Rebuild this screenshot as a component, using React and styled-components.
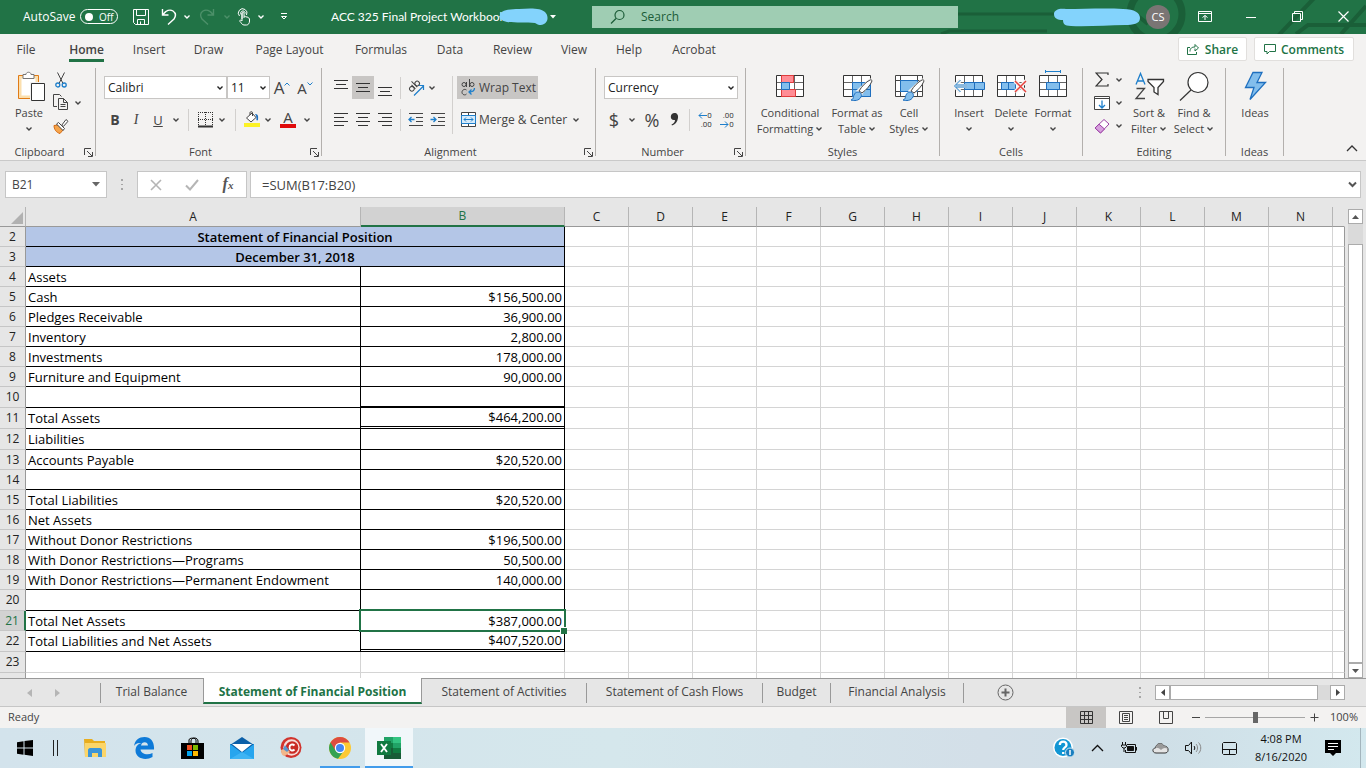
import { useState } from "react";
import styled, { createGlobalStyle } from "styled-components";

const COLUMNS = ["C", "D", "E", "F", "G", "H", "I", "J", "K", "L", "M", "N"];

const ROWS = [
  { n: 2, title: "Statement of Financial Position" },
  { n: 3, title: "December 31, 2018" },
  { n: 4, a: "Assets" },
  { n: 5, a: "Cash", b: "$156,500.00" },
  { n: 6, a: "Pledges Receivable", b: "36,900.00" },
  { n: 7, a: "Inventory", b: "2,800.00" },
  { n: 8, a: "Investments", b: "178,000.00" },
  { n: 9, a: "Furniture and Equipment", b: "90,000.00" },
  { n: 10, tall: true, line: "2px solid #000" },
  { n: 11, tall: true, a: "Total Assets", b: "$464,200.00", line: "3px double #000" },
  { n: 12, tall: true, a: "Liabilities" },
  { n: 13, a: "Accounts Payable", b: "$20,520.00" },
  { n: 14 },
  { n: 15, a: "Total Liabilities", b: "$20,520.00" },
  { n: 16, a: "Net Assets" },
  { n: 17, a: "Without Donor Restrictions", b: "$196,500.00" },
  { n: 18, a: "With Donor Restrictions—Programs", b: "50,500.00" },
  { n: 19, a: "With Donor Restrictions—Permanent Endowment", b: "140,000.00" },
  { n: 20, tall: true },
  { n: 21, a: "Total Net Assets", b: "$387,000.00", selected: true },
  { n: 22, tall: true, a: "Total Liabilities and Net Assets", b: "$407,520.00", line: "3px double #000" },
  { n: 23, tall: true, empty: true },
  { n: "", empty: true },
];

const MENU = ["File", "Home", "Insert", "Draw", "Page Layout", "Formulas", "Data", "Review", "View", "Help", "Acrobat"];
const MENU_WIDTHS = [52, 69, 56, 63, 99, 84, 54, 71, 52, 58, 72];

const SHEETS = [
  { name: "Trial Balance", width: 102 },
  { name: "Statement of Financial Position", width: 219, active: true },
  { name: "Statement of Activities", width: 165 },
  { name: "Statement of Cash Flows", width: 176 },
  { name: "Budget", width: 68 },
  { name: "Financial Analysis", width: 133 },
];

function Chevron({ color = "#444" }) {
  return (
    <svg width="8" height="6" viewBox="0 0 8 6" fill="none" stroke={color} strokeWidth="1.4">
      <path d="M1.5 1.5 4 4l2.5-2.5" />
    </svg>
  );
}

function Launcher({ label }) {
  return (
    <LauncherButton aria-label={label}>
      <svg width="9" height="9" viewBox="0 0 9 9" fill="none" stroke="#444">
        <path d="M.5 7V.5H7M3 3l5 5M8.500 4v4.500H4" />
      </svg>
    </LauncherButton>
  );
}

function Lines({ rows }) {
  return (
    <svg width="14" height="16" viewBox="0 0 14 16" stroke="#333">
      {rows.map(([x1, x2, y]) => <path key={y} d={`M${x1} ${y}.5H${x2}`} />)}
    </svg>
  );
}

function DropDown({ label, value, width }) {
  return (
    <SelectBox $width={width}>
      <select aria-label={label} defaultValue={value}>
        <option>{value}</option>
      </select>
      <Chevron color="#222" />
    </SelectBox>
  );
}

function GridIcon({ children }) {
  return (
    <svg width="32" height="32" viewBox="0 0 32 32" fill="none">
      <path d="M2.500 5.500h27v21h-27z" fill="#fff" />
      <path d="M11.500 5.500v21M20.500 5.500v21M2.500 12.500h27M2.500 19.500h27" stroke="#666" />
      <path d="M2.500 5.500h27v21h-27z" stroke="#333" />
      {children}
    </svg>
  );
}

function Brush() {
  return (
    <>
      <path d="M30 10 20 24l-3-3L29 10z" fill="#fff" stroke="#f3f2f1" strokeWidth="3" />
      <path d="M31 11c-2 5-6 9-10 12l-3-2c3-5 7-9 11-11 1-.5 2 0 2 1z" fill="#fff" stroke="#444" />
      <path d="M17 22c3 0 4 3 3 5-2 4-7 4-10 3 3-1 2-3 3-5 1-2 2-3 4-3z" fill="#83beec" stroke="#1e6fbf" />
    </>
  );
}

function BigTool({ width, lines, arrow, children }) {
  return (
    <BigButton $width={width}>
      {children}
      <span>{lines[0]}</span>
      <span>{lines[1]} {arrow && <Chevron />}</span>
    </BigButton>
  );
}

function TitleBar() {
  return (
    <Title>
      <Circuit viewBox="0 0 500 34" width="500" height="34" fill="none" stroke="#1a5f38" strokeWidth="3">
        <path d="M92 14h100M75 34l8-3h98M200 14h18" />
        <circle cx="197" cy="14" r="4" />
        <circle cx="290" cy="14" r="26" strokeWidth="7" />
        <path d="M475 34 500 6M430 34l12-9h58M410 38l44-46M262 8l20 16" strokeWidth="4" />
      </Circuit>
      <QuickAccess>
        <AutoSave>
          AutoSave
          <Toggle role="switch" aria-checked="false" aria-label="AutoSave"><i />Off</Toggle>
        </AutoSave>
        <TitleButton $width={28} aria-label="Save">
          <svg width="18" height="18" viewBox="0 0 18 18" fill="none" stroke="#fff">
            <path d="M1.500 1.500h15v15h-13l-2-2zM4.500 1.500v6h9v-6M5.500 16.500v-5h7v5M8.500 16.500v-3" />
          </svg>
        </TitleButton>
        <TitleButton $width={28} aria-label="Undo">
          <svg width="16" height="17" viewBox="0 0 16 17" fill="none" stroke="#fff" strokeWidth="1.400">
            <path d="M1.500 1v6h6M2 6.500C5 2.500 9 1 12 3c3 2 3 5 1 8l-6 5.500" />
          </svg>
        </TitleButton>
        <TitleButton $width={8} aria-label="Undo history"><Chevron color="#fff" /></TitleButton>
        <TitleButton $width={32} aria-label="Redo">
          <svg width="16" height="17" viewBox="0 0 16 17" fill="none" stroke="#4c9069" strokeWidth="1.400">
            <path d="M14.500 1v6h-6M14 6.500C11 2.500 7 1 4 3 1 5 1 8 3 11l6 5.500" />
          </svg>
        </TitleButton>
        <TitleButton $width={8} aria-label="Redo history"><Chevron color="#4c9069" /></TitleButton>
        <TitleButton $width={26} aria-label="Touch mode">
          <svg width="14" height="18" viewBox="0 0 14 18" fill="none" stroke="#fff">
            <path d="M5 11V5c0-1.500 2-1.500 2 0v5M7 8.500c1-.8 2 0 2 .8M9 9c1-.5 2 0 2 1M11 10c1-.3 1.500.3 1.500 1v2c0 2-1 4-3 4H7c-2 0-2.500-2-4-3.500-1-1 .5-2 2-.5V5M2.500 8A4.300 4.300 0 1 1 9.500 7M4 6.500A2.300 2.300 0 1 1 8.200 5.500" />
          </svg>
        </TitleButton>
        <TitleButton $width={8} aria-label="Touch mode options"><Chevron color="#fff" /></TitleButton>
        <TitleButton $width={38} aria-label="Customize toolbar">
          <svg width="8" height="8" viewBox="0 0 8 8" fill="none" stroke="#fff"><path d="M1 .5h6M1.500 3.500 4 6l2.500-2.500z" /></svg>
        </TitleButton>
      </QuickAccess>
      <FileName>
        <span>ACC 325 Final Project Workbook</span>
        <svg width="50" height="18" viewBox="0 0 50 18">
          <path d="M1 8C0 3 8 1 20 1c12-1 22-1 26 3 4 4 3 10-1 12-3 2-6 1-9-1-8-1-20 0-28-1-5-1-7-3-8-6z" fill="#83d3fc" />
        </svg>
        <svg width="6" height="4" viewBox="0 0 6 4"><path d="M0 0h6L3 3.500z" fill="#fff" /></svg>
      </FileName>
      <Search>
        <svg width="16" height="16" viewBox="0 0 16 16" fill="none" stroke="#1c5c38" strokeWidth="1.200">
          <circle cx="9.500" cy="6" r="4.500" /><path d="m6 9.500-5 5" />
        </svg>
        <input aria-label="Search" placeholder="Search" />
      </Search>
      <Account>
        <svg width="88" height="20" viewBox="0 0 88 20">
          <path d="M1 7c0-4 5-6 12-5 18 0 40-1 57 0 12 0 17 4 17 9 0 6-7 7-15 7-17 0-38 2-54 1-7 0-8-3-8-6-6 0-9-2-9-6z" fill="#83d3fc" />
        </svg>
        <Avatar>CS</Avatar>
        <TitleButton $width={46} aria-label="Ribbon display options">
          <svg width="14" height="12" viewBox="0 0 14 12" fill="none" stroke="#fff"><path d="M.5.5h13v10H.5zM.5 2.500h13M7 9V4.500M4.500 6.500 7 4.500l2.500 2" /></svg>
        </TitleButton>
        <TitleButton $width={46} aria-label="Minimize">
          <svg width="12" height="12" viewBox="0 0 12 12" stroke="#fff"><path d="M1 6.500h10" /></svg>
        </TitleButton>
        <TitleButton $width={46} aria-label="Restore">
          <svg width="11" height="11" viewBox="0 0 11 11" fill="none" stroke="#fff"><path d="M.5 2.500h8v8h-8zM2.500 2V.5h8v8H9" /></svg>
        </TitleButton>
        <TitleButton $width={46} aria-label="Close">
          <svg width="11" height="11" viewBox="0 0 11 11" stroke="#fff" strokeWidth="1.200"><path d="m.5.5 10 10M10.500.5l-10 10" /></svg>
        </TitleButton>
      </Account>
    </Title>
  );
}

function ClipboardGroup() {
  return (
    <Group $width={96}>
      <GroupBody $left={8}>
        <BigTool width={42} lines={["Paste", ""]} arrow>
          <svg width="32" height="32" viewBox="0 0 32 32" fill="none">
            <path d="M5.500 5.500h20v23h-20z" fill="#fbdfae" stroke="#e07b16" />
            <path d="M8.500 8.500h14v17h-14z" fill="#fff" />
            <path d="M10 8.500v-4h3c0-3 5-3 5 0h3v4z" fill="#fff" stroke="#777" />
            <path d="M17 12h14v19H17z" fill="#f3f2f1" />
            <path d="M18.500 13.500h13v17h-13z" fill="#fff" stroke="#333" />
          </svg>
        </BigTool>
        <SmallColumn>
          <ToolButton $width={21} aria-label="Cut">
            <svg width="12" height="16" viewBox="0 0 12 16" fill="none" stroke="#444">
              <path d="m2.500.5 5.500 11M9.500.5 4 11.500" />
              <g stroke="#1e7fcb" strokeWidth="1.300"><circle cx="2.800" cy="13" r="2" /><circle cx="9.200" cy="13" r="2" /></g>
            </svg>
          </ToolButton>
          <div>
            <ToolButton $width={21} aria-label="Copy">
              <svg width="16" height="17" viewBox="0 0 16 17" fill="none" stroke="#444">
                <path d="M4 12.500H.5V.5h6l2 2M5.500 4.500h5l4 4v7h-9zM10.500 4.500v4h4M7.500 10.500h5M7.500 12.500h5" />
              </svg>
            </ToolButton>
            <ToolButton $width={14} aria-label="Copy options"><Chevron /></ToolButton>
          </div>
          <ToolButton $width={21} aria-label="Format painter">
            <svg width="16" height="16" viewBox="0 0 16 16" fill="none">
              <path d="M5 7 1 7.500C1 11 3 14.500 7 15.500L10 12z" fill="#f6a54c" stroke="#d5690f" />
              <path d="m5.500 4.500 6 6-1.500 2L3.500 6z" fill="#fff" stroke="#444" />
              <path d="M8.500 7.500 13 1.500l2 1.800-4.500 5z" fill="#fff" stroke="#444" />
            </svg>
          </ToolButton>
        </SmallColumn>
      </GroupBody>
      <GroupLabel>Clipboard<Launcher label="Clipboard settings" /></GroupLabel>
    </Group>
  );
}

function FontGroup() {
  return (
    <Group $width={226}>
      <ToolRows>
        <ToolRow>
          <DropDown label="Font" value="Calibri" width={123} />
          <DropDown label="Font size" value="11" width={43} />
          <ToolButton $width={24} $size={17} aria-label="Increase font size">A<Raised viewBox="0 0 6 4"><path d="M.5 3.500 3 1l2.500 2.500" /></Raised></ToolButton>
          <ToolButton $width={22} $size={15} aria-label="Decrease font size">A<Raised viewBox="0 0 6 4"><path d="M.5.5 3 3 5.500.5" /></Raised></ToolButton>
        </ToolRow>
        <ToolRow>
          <ToolButton $width={22} $size={14}><b>B</b></ToolButton>
          <ToolButton $width={20} $size={14}><Italic>I</Italic></ToolButton>
          <ToolButton $width={24} $size={13}><u>U</u></ToolButton>
          <ToolButton $width={12} aria-label="Underline options"><Chevron /></ToolButton>
          <Rule />
          <ToolButton $width={20} aria-label="Borders">
            <svg width="15" height="16" viewBox="0 0 15 16" fill="none" stroke="#333">
              <path d="M.5 0v14M14.500 0v14M7.500 0v14M0 .5h15M0 7.500h15" strokeDasharray="1 1" />
              <path d="M0 14.500h15" strokeWidth="2" />
            </svg>
          </ToolButton>
          <ToolButton $width={14} aria-label="Border options"><Chevron /></ToolButton>
          <Rule />
          <ToolButton $width={20} aria-label="Fill color">
            <svg width="16" height="17" viewBox="0 0 16 17" fill="none">
              <path d="M2.500 7 8 2l4 4.500-5 4.500z" fill="#fff" stroke="#444" />
              <path d="M6 4V1.500c0-1 2.500-1 2.500 0V5" stroke="#444" />
              <path d="M11 3c3 0 3.500 2 3 6-1 1-2 0-1.500-1 0-2-.5-4-1.500-5z" fill="#1e6fbf" />
              <path d="M0 12h16v4H0z" fill="#fcf226" />
            </svg>
          </ToolButton>
          <ToolButton $width={12} aria-label="Fill color options"><Chevron /></ToolButton>
          <ToolButton $width={28} aria-label="Font color"><FontColor>A</FontColor></ToolButton>
          <ToolButton $width={9} aria-label="Font color options"><Chevron /></ToolButton>
        </ToolRow>
      </ToolRows>
      <GroupLabel>Font<Launcher label="Font settings" /></GroupLabel>
    </Group>
  );
}

function AlignmentGroup() {
  return (
    <Group $width={274}>
      <GroupBody>
        <ToolRows>
          <ToolRow>
            <ToolButton $width={22} aria-label="Top align"><Lines rows={[[0, 14, 0], [2, 12, 4], [0, 14, 8]]} /></ToolButton>
            <ToolButton $width={22} $on aria-label="Middle align"><Lines rows={[[0, 14, 3], [2, 12, 7], [0, 14, 11]]} /></ToolButton>
            <ToolButton $width={22} aria-label="Bottom align"><Lines rows={[[0, 14, 7], [2, 12, 11], [0, 14, 15]]} /></ToolButton>
            <Rule $gap={4} />
            <ToolButton $width={22} aria-label="Orientation">
              <svg width="17" height="17" viewBox="0 0 17 17" fill="none">
                <g stroke="#444" transform="rotate(-45 6 7)"><circle cx="2.500" cy="7.500" r="2.300" /><path d="M5 4.500V10M7.500 2v8" /><circle cx="10" cy="7.500" r="2.300" /></g>
                <path d="M6 16.500 15.500 7M11 6.500h4.500V11" stroke="#1e7fcb" strokeWidth="1.200" />
              </svg>
            </ToolButton>
            <ToolButton $width={10} aria-label="Orientation options"><Chevron /></ToolButton>
          </ToolRow>
          <ToolRow>
            <ToolButton $width={22} aria-label="Align left"><Lines rows={[[0, 14, 1], [0, 10, 5], [0, 14, 9], [0, 10, 13]]} /></ToolButton>
            <ToolButton $width={22} aria-label="Center"><Lines rows={[[0, 14, 1], [2, 12, 5], [0, 14, 9], [2, 12, 13]]} /></ToolButton>
            <ToolButton $width={22} aria-label="Align right"><Lines rows={[[0, 14, 1], [4, 14, 5], [0, 14, 9], [4, 14, 13]]} /></ToolButton>
            <Rule $gap={4} />
            <ToolButton $width={22} aria-label="Decrease indent">
              <svg width="16" height="15" viewBox="0 0 16 15" fill="none" stroke="#444">
                <path d="M1 1.500h14M8 5.500h7M8 9.500h7M1 13.500h14" /><path d="M6.500 7.500H1M3.500 5 1 7.500 3.500 10" stroke="#1e7fcb" strokeWidth="1.300" />
              </svg>
            </ToolButton>
            <ToolButton $width={22} aria-label="Increase indent">
              <svg width="16" height="15" viewBox="0 0 16 15" fill="none" stroke="#444">
                <path d="M1 1.500h14M8 5.500h7M8 9.500h7M1 13.500h14" /><path d="M.5 7.500H6M3.500 5 6 7.500 3.500 10" stroke="#1e7fcb" strokeWidth="1.300" />
              </svg>
            </ToolButton>
          </ToolRow>
        </ToolRows>
        <TallRule />
        <ToolRows $left={4}>
          <TextTool $on>
            <svg width="15" height="18" viewBox="0 0 15 18" fill="none" stroke="#444">
              <circle cx="3" cy="5.500" r="2" /><path d="M5.500 3v5M8.500 0v8M5.500 11c-2-1.500-4.500 0-4.500 2.300s3 3.500 4.500 1.700" /><circle cx="11" cy="5.500" r="2" />
              <path d="M13.500 9c0 3-1.500 4-5.500 4M10.500 10.500 8 13l2.500 2.500" stroke="#1e7fcb" strokeWidth="1.300" />
            </svg>
            Wrap Text
          </TextTool>
          <ToolRow>
            <TextTool>
              <svg width="15" height="16" viewBox="0 0 15 16" fill="none">
                <path d="M.5.5h14v14H.5zM7.500.5v3M7.500 11.500v3" fill="#fff" stroke="#444" />
                <path d="M.5 3.500h14v8H.5z" fill="#d7ebfa" stroke="#1e7fcb" />
                <path d="M3 7.500h9M5 5.500l-2 2 2 2M10 5.500l2 2-2 2" stroke="#1e7fcb" />
              </svg>
              Merge &amp; Center
            </TextTool>
            <ToolButton $width={14} aria-label="Merge options"><Chevron /></ToolButton>
          </ToolRow>
        </ToolRows>
      </GroupBody>
      <GroupLabel>Alignment<Launcher label="Alignment settings" /></GroupLabel>
    </Group>
  );
}

function NumberGroup() {
  return (
    <Group $width={150}>
      <ToolRows>
        <DropDown label="Number format" value="Currency" width={134} />
        <ToolRow>
          <ToolButton $width={20} $size={18}>$</ToolButton>
          <ToolButton $width={16} aria-label="Currency options"><Chevron /></ToolButton>
          <ToolButton $width={24} $size={18}>%</ToolButton>
          <ToolButton $width={20} aria-label="Comma style">
            <svg width="9" height="13" viewBox="0 0 9 13"><path d="M4.500 0C7 0 8.500 2 8 5c-.5 4-3 6.500-6 7.500l-.5-1C3.500 10.500 5 9 5 7 2 7.500.8 6 .8 3.800.8 1.500 2.500 0 4.500 0z" fill="#333" /></svg>
          </ToolButton>
          <Rule $gap={5} />
          <ToolButton $width={20} aria-label="Increase decimal">
            <Decimals><span><Arrow viewBox="0 0 9 7"><path d="M9 3.500H1M4 .5l-3 3 3 3" /></Arrow>0</span><span>.00</span></Decimals>
          </ToolButton>
          <ToolButton $width={24} aria-label="Decrease decimal">
            <Decimals><span>.00</span><span><Arrow viewBox="0 0 9 7"><path d="M0 3.500h8M5 .5l3 3-3 3" /></Arrow>0</span></Decimals>
          </ToolButton>
        </ToolRow>
      </ToolRows>
      <GroupLabel>Number<Launcher label="Number settings" /></GroupLabel>
    </Group>
  );
}

function StylesGroup() {
  return (
    <Group $width={194}>
      <GroupBody $left={8}>
        <BigTool width={72} lines={["Conditional", "Formatting"]} arrow>
          <GridIcon>
            <path d="M7.500 5.500h12v7h-12zM7.500 19.500h14v7h-14z" fill="#ff8d95" stroke="#e03c3c" />
            <path d="M7.500 12.500h8v7h-8z" fill="#83beec" stroke="#1e6fbf" />
          </GridIcon>
        </BigTool>
        <BigTool width={62} lines={["Format as", "Table"]} arrow>
          <GridIcon>
            <path d="M11.500 12.500h18v14h-18zM20.500 12.500v14M11.500 19.500h18" fill="#83beec" stroke="#1e6fbf" />
            <Brush />
          </GridIcon>
        </BigTool>
        <BigTool width={42} lines={["Cell", "Styles"]} arrow>
          <svg width="32" height="32" viewBox="0 0 32 32" fill="none">
            <path d="M2.500 5.500h27v21h-27zM2.500 10.500h27M2.500 21.500h27M7.500 5.500v21M24.500 5.500v21" fill="#fff" stroke="#444" />
            <path d="M7.500 10.500h17v11h-17z" fill="#83beec" stroke="#1e6fbf" />
            <Brush />
          </svg>
        </BigTool>
      </GroupBody>
      <GroupLabel>Styles</GroupLabel>
    </Group>
  );
}

function CellsGroup() {
  return (
    <Group $width={143}>
      <GroupBody $left={8}>
        <BigTool width={42} lines={["Insert", ""]} arrow>
          <GridIcon>
            <path d="M11.500 12.500h20v7h-20zM21.500 12.500v7" fill="#83beec" stroke="#1e6fbf" />
            <path d="M14 16H1.500M7.500 10l-6 6 6 6" stroke="#f3f2f1" strokeWidth="4" />
            <path d="M14 15H3M14 17H3M7.500 10l-6 6 6 6" stroke="#1e7fcb" />
          </GridIcon>
        </BigTool>
        <BigTool width={42} lines={["Delete", ""]} arrow>
          <GridIcon>
            <path d="M6.500 12.500h14v7h-14zM13.500 12.500v7" fill="#83beec" stroke="#1e6fbf" />
            <path d="m20 11 11 11M31 11 20 22" stroke="#f3f2f1" strokeWidth="4" />
            <path d="m20 11 11 11M31 11 20 22" stroke="#e8423d" strokeWidth="1.500" />
          </GridIcon>
        </BigTool>
        <BigTool width={42} lines={["Format", ""]} arrow>
          <GridIcon>
            <path d="M9.500 12.500h13v7h-13z" fill="#83beec" stroke="#1e6fbf" />
            <path d="M8.500 1.500h15M8.500 0v3M23.500 0v3" stroke="#1e7fcb" />
          </GridIcon>
        </BigTool>
      </GroupBody>
      <GroupLabel>Cells</GroupLabel>
    </Group>
  );
}

function EditingGroup() {
  return (
    <Group $width={143}>
      <GroupBody $left={8}>
        <SmallColumn>
          <div>
            <ToolButton $width={21} aria-label="AutoSum">
              <svg width="14" height="15" viewBox="0 0 14 15" fill="none" stroke="#333" strokeWidth="1.200"><path d="M13 3V1H1l6 6.500L1 14h12v-2" /></svg>
            </ToolButton>
            <ToolButton $width={14} aria-label="AutoSum options"><Chevron /></ToolButton>
          </div>
          <div>
            <ToolButton $width={21} aria-label="Fill">
              <svg width="16" height="14" viewBox="0 0 16 14" fill="none"><path d="M.5.5h15v13H.5zM.5 2.500h15" fill="#fff" stroke="#444" /><path d="M8 4.500V12M5 9l3 3 3-3" stroke="#1e7fcb" strokeWidth="1.300" /></svg>
            </ToolButton>
            <ToolButton $width={14} aria-label="Fill options"><Chevron /></ToolButton>
          </div>
          <div>
            <ToolButton $width={21} aria-label="Clear">
              <svg width="16" height="16" viewBox="0 0 16 16"><path d="m1 10 9-8.500 5 4.500-8.500 9z" fill="#fff" stroke="#9b3fa5" /><path d="m1 10 4-3.800L10.500 11l-4 4z" fill="#d6a0dd" stroke="#9b3fa5" /></svg>
            </ToolButton>
            <ToolButton $width={14} aria-label="Clear options"><Chevron /></ToolButton>
          </div>
        </SmallColumn>
        <BigTool width={46} lines={["Sort &", "Filter"]} arrow>
          <svg width="32" height="32" viewBox="0 0 32 32" fill="none" strokeWidth="1.300">
            <path d="M3 14.500 7.500 3.500 12 14.500M4.500 11h6" stroke="#1e7fcb" />
            <path d="M3.500 18.500h8L3 28.500h9" stroke="#444" />
            <path d="M15 9.500h15.500v2L25 17.500v7l-4-2.500v-4.500L15 11.500z" fill="#fff" stroke="#333" />
          </svg>
        </BigTool>
        <BigTool width={44} lines={["Find &", "Select"]} arrow>
          <svg width="32" height="32" viewBox="0 0 32 32" stroke="#333" strokeWidth="1.200"><circle cx="20" cy="12.500" r="10" fill="#fff" /><path d="M13 20 2 30.500" /></svg>
        </BigTool>
      </GroupBody>
      <GroupLabel>Editing</GroupLabel>
    </Group>
  );
}

function Ribbon() {
  return (
    <RibbonBar>
      <ClipboardGroup />
      <FontGroup />
      <AlignmentGroup />
      <NumberGroup />
      <StylesGroup />
      <CellsGroup />
      <EditingGroup />
      <Group $width={58}>
        <GroupBody $left={8}>
          <BigTool width={42} lines={["Ideas", ""]}>
            <svg width="32" height="32" viewBox="0 0 32 32"><path d="M14 2.500h9l-5 10h8.500L11 29.500l4-12H6.500z" fill="#83beec" stroke="#1e6fbf" strokeWidth="1.300" /></svg>
          </BigTool>
        </GroupBody>
        <GroupLabel>Ideas</GroupLabel>
      </Group>
      <Collapse aria-label="Collapse ribbon">
        <svg width="12" height="7" viewBox="0 0 12 7" fill="none" stroke="#333" strokeWidth="1.300"><path d="m1 6 5-5 5 5" /></svg>
      </Collapse>
    </RibbonBar>
  );
}

function FormulaBar() {
  return (
    <FormulaRow>
      <NameBox>
        <input aria-label="Name box" defaultValue="B21" />
        <svg width="8" height="5" viewBox="0 0 8 5"><path d="M0 0h8L4 4.500z" fill="#666" /></svg>
      </NameBox>
      <Dots />
      <FormulaButtons>
        <ToolButton $width={36} aria-label="Cancel"><svg width="12" height="12" viewBox="0 0 12 12" stroke="#b5b5b5" strokeWidth="1.600"><path d="m1 1 10 10M11 1 1 11" /></svg></ToolButton>
        <ToolButton $width={36} aria-label="Enter"><svg width="14" height="12" viewBox="0 0 14 12" fill="none" stroke="#b5b5b5" strokeWidth="2"><path d="m1 6.500 4 4 8-9.500" /></svg></ToolButton>
        <ToolButton $width={36} aria-label="Insert function"><Fx>f<sub>x</sub></Fx></ToolButton>
      </FormulaButtons>
      <FormulaInput>
        <input aria-label="Formula" defaultValue="=SUM(B17:B20)" />
        <svg width="9" height="7" viewBox="0 0 9 7" fill="none" stroke="#555" strokeWidth="2"><path d="m1 1.500 3.500 3.500L8 1.500" /></svg>
      </FormulaInput>
    </FormulaRow>
  );
}

function Sheet() {
  return (
    <SheetArea>
      <GridFrame>
        <Grid>
          <colgroup>
            <Col $width={26} />
            <Col $width={335} />
            <Col $width={204} />
            {COLUMNS.map(c => <Col key={c} $width={64} />)}
            <col />
          </colgroup>
          <thead>
            <tr>
              <ColHead aria-label="Select all"><Corner viewBox="0 0 12 12"><path d="M12 0v12H0z" /></Corner></ColHead>
              <ColHead>A</ColHead>
              <ColHead $on>B</ColHead>
              {COLUMNS.map(c => <ColHead key={c}>{c}</ColHead>)}
              <ColHead $last />
            </tr>
          </thead>
          <tbody>
            {ROWS.map(row => (
              <Row key={row.n} $tall={row.tall}>
                <RowHead $on={row.selected}>{row.n}</RowHead>
                {row.title ?
                  <Banner colSpan={2}>{row.title}</Banner>
                  :
                  <>
                    <Cell $boxed={!row.empty}>{row.a}</Cell>
                    <Amount $boxed={!row.empty} $line={row.line} $selected={row.selected}>{row.b}</Amount>
                  </>
                }
                {COLUMNS.map(c => <Cell key={c} />)}
                <Cell $last />
              </Row>
            ))}
          </tbody>
        </Grid>
      </GridFrame>
      <VerticalScroll>
        <ScrollButton aria-label="Scroll up"><svg width="7" height="4" viewBox="0 0 7 4"><path d="M0 4h7L3.500 0z" fill="#555" /></svg></ScrollButton>
        <ScrollGap />
        <ScrollThumb />
        <ScrollButton aria-label="Scroll down"><svg width="7" height="4" viewBox="0 0 7 4"><path d="M0 0h7L3.500 4z" fill="#555" /></svg></ScrollButton>
      </VerticalScroll>
    </SheetArea>
  );
}

function SheetTabs() {
  return (
    <TabStrip>
      <TabNav>
        <button aria-label="Previous sheet"><svg width="5" height="8" viewBox="0 0 5 8"><path d="M5 0v8L0 4z" fill="#b5b5b5" /></svg></button>
        <button aria-label="Next sheet"><svg width="5" height="8" viewBox="0 0 5 8"><path d="M0 0v8l5-4z" fill="#b5b5b5" /></svg></button>
      </TabNav>
      {SHEETS.map((s, i) => (
        <SheetTab key={s.name} $width={s.width} $active={s.active} $plain={i === 0}>{s.name}</SheetTab>
      ))}
      <AddSheet aria-label="New sheet">
        <svg width="17" height="17" viewBox="0 0 17 17" fill="none" stroke="#666"><circle cx="8.500" cy="8.500" r="7.500" /><path d="M4.500 8.500h8M8.500 4.500v8" strokeWidth="2" /></svg>
      </AddSheet>
      <Dots />
      <HorizontalScroll>
        <ScrollButton aria-label="Scroll left"><svg width="4" height="7" viewBox="0 0 4 7"><path d="M4 0v7L0 3.500z" fill="#444" /></svg></ScrollButton>
        <ScrollThumb />
        <ScrollGap $across />
        <ScrollButton aria-label="Scroll right"><svg width="4" height="7" viewBox="0 0 4 7"><path d="M0 0v7l4-3.500z" fill="#444" /></svg></ScrollButton>
      </HorizontalScroll>
    </TabStrip>
  );
}

function StatusBar() {
  const [zoom, setZoom] = useState(100);

  return (
    <Status>
      <StatusText>Ready</StatusText>
      <StatusTools>
        <ViewButton $on aria-label="Normal view">
          <svg width="13" height="13" viewBox="0 0 13 13" fill="none" stroke="#333"><path d="M.5.5h12v12H.5zM.5 4.500h12M.5 8.500h12M4.500.5v12M8.500.5v12" /></svg>
        </ViewButton>
        <ViewButton aria-label="Page layout view">
          <svg width="14" height="13" viewBox="0 0 14 13" fill="none" stroke="#444"><path d="M.5.5h13v12H.5zM3.500 2.500h7v8h-7zM5 4.500h4M5 6.500h4M5 8.500h4" /></svg>
        </ViewButton>
        <ViewButton aria-label="Page break view">
          <svg width="14" height="13" viewBox="0 0 14 13" fill="none" stroke="#444"><path d="M.5.5h13v12H.5zM4.500.5v7M9.500.5v7M4.500 7.500h5" /></svg>
        </ViewButton>
        <ZoomButton aria-label="Zoom out"><svg width="9" height="9" viewBox="0 0 9 9" stroke="#444"><path d="M1 4.500h8" /></svg></ZoomButton>
        <ZoomSlider type="range" aria-label="Zoom" min="0" max="200" value={zoom} onChange={e => setZoom(Number(e.target.value))} />
        <ZoomButton aria-label="Zoom in"><svg width="9" height="9" viewBox="0 0 9 9" stroke="#444"><path d="M.5 4.500h8M4.500.5v8" /></svg></ZoomButton>
        <ZoomLabel>{zoom}%</ZoomLabel>
      </StatusTools>
    </Status>
  );
}

function Taskbar() {
  return (
    <TaskRow>
      <TaskButton aria-label="Start">
        <svg width="16" height="16" viewBox="0 0 16 16"><path d="M0 2.200 6.500 1.300v6.200H0zM7.500 1.100 16 0v7.500H7.500zM0 8.500h6.500v6.200L0 13.800zM7.500 8.500H16V16l-8.500-1.200z" fill="#000" /></svg>
      </TaskButton>
      <TaskDivider />
      <TaskButton aria-label="File Explorer">
        <svg width="22" height="20" viewBox="0 0 22 20"><path d="M0 1h8l2 2h11v16H1z" fill="#e8ad1f" /><path d="M1 5h21v14H1z" fill="#fbd569" /><path d="M4 19v-7c0-1 1-2 2-2h10c1 0 2 1 2 2v7h-4v-4H8v4z" fill="#3c95d8" /></svg>
      </TaskButton>
      <TaskButton aria-label="Edge">
        <svg width="22" height="22" viewBox="0 0 22 22"><path d="M1 9C2 3 6 0 11.500 0 18 0 21.500 5 21 12.500H7.500c.5 4.500 7 6 12 3.500V20c-7 4-17 1.500-17-6.500 0-3.500 2-6.500 6-7.500C4 5.500 2 7 1 9zm7-.5h7c0-4.500-6.500-4.500-7 0z" fill="#0e7ad8" /></svg>
      </TaskButton>
      <TaskButton aria-label="Store">
        <svg width="24" height="23" viewBox="0 0 24 23"><path d="M8 6V3c0-2.500 7-2.500 7 0v3M10 6V4c0-4 7-4 7 0v2" fill="none" stroke="#000" /><path d="M0 6h23v16H0z" fill="#000" /><path d="M6 8h5v5H6z" fill="#f05122" /><path d="M12 8h5v5h-5z" fill="#7eba00" /><path d="M6 14h5v5H6z" fill="#00a3ee" /><path d="M12 14h5v5h-5z" fill="#fdb901" /></svg>
      </TaskButton>
      <TaskButton aria-label="Mail">
        <svg width="24" height="22" viewBox="0 0 24 22"><path d="M0 8 12 0l12 8v4H0z" fill="#0b5fa8" /><path d="M0 7h24v15H0z" fill="#27a5ee" /><path d="M0 7h24L12 16z" fill="#0b5fa8" /><path d="M2 7h20l-10 8z" fill="#fff" /><path d="m0 22 12-7 12 7z" fill="#3fb4f4" /></svg>
      </TaskButton>
      <TaskButton aria-label="CCleaner">
        <svg width="22" height="22" viewBox="0 0 22 22"><circle cx="11" cy="10.500" r="10.500" fill="#d1332c" /><circle cx="11.500" cy="10.500" r="8.200" fill="#f5dcd8" /><circle cx="12" cy="10.500" r="6.300" fill="#c92a24" /><path d="M14.500 8.500c-2-2-5-.8-5 2s3 4 5 2" fill="none" stroke="#fff" strokeWidth="1.800" /><path d="m1 13 5-2 4 4-5 4c-3 0-4-3-4-6z" fill="#f2b78b" /><path d="m5 8 4 5-2 2-4-3z" fill="#5b95cc" /></svg>
      </TaskButton>
      <TaskButton $running aria-label="Chrome">
        <svg width="22" height="22" viewBox="0 0 22 22"><circle cx="11" cy="11" r="11" fill="#fcc934" /><path d="M11 11 1.500 5.500A11 11 0 0 0 9 21.800L15.500 13z" fill="#34a252" /><path d="M1.500 5.500A11 11 0 0 1 20.500 5.500H11L6.500 13.500z" fill="#dd4c40" /><circle cx="11" cy="11" r="5.200" fill="#fff" /><circle cx="11" cy="11" r="4" fill="#4486f4" /></svg>
      </TaskButton>
      <TaskButton $running $current aria-label="Excel">
        <svg width="24" height="22" viewBox="0 0 24 22"><path d="M7 0h9v6H7z" fill="#21a366" /><path d="M16 0h8v6h-8z" fill="#33c481" /><path d="M7 6h9v5H7z" fill="#107c41" /><path d="M16 6h8v5h-8z" fill="#21a366" /><path d="M7 11h17v11H7z" fill="#185c37" /><path d="M16 11h8v5h-8z" fill="#107c41" /><path d="M0 4h14v14H0z" fill="#117a40" /><path d="m4 7 6 8M10 7l-6 8" stroke="#fff" strokeWidth="1.900" /></svg>
      </TaskButton>
      <Tray>
        <TrayButton $width={34} aria-label="Support assistant">
          <svg width="22" height="22" viewBox="0 0 22 22"><circle cx="10" cy="10.500" r="10" fill="#fff" /><circle cx="10" cy="10.500" r="8.500" fill="#1296d4" /><path d="M6.800 8c0-4.500 6.700-4.500 6.700 0 0 2.500-3.300 2.300-3.300 5M10.200 15v2" fill="none" stroke="#fff" strokeWidth="2.300" /><circle cx="17" cy="15.500" r="4.500" fill="#1a7fc0" stroke="#cfe6f0" /><path d="M17 13v5" stroke="#fff" strokeWidth="1.500" /></svg>
        </TrayButton>
        <TrayButton $width={32} aria-label="Show hidden icons"><svg width="13" height="8" viewBox="0 0 13 8" fill="none" stroke="#111" strokeWidth="1.300"><path d="m1 7 5.500-5.500L12 7" /></svg></TrayButton>
        <TrayButton $width={32} aria-label="Battery">
          <svg width="17" height="12" viewBox="0 0 17 12" fill="none" stroke="#111"><path d="M6 2.500h8.500v8H4.500V8M15.500 5v3.500" /><path d="M6.500 4.500h6v4h-6z" fill="#111" /><path d="M1.500 0v3M4.500 0v3M.5 3h5v1.500L4 6H2L.5 4.500zM3 6v4" /></svg>
        </TrayButton>
        <TrayButton $width={30} aria-label="OneDrive">
          <svg width="17" height="12" viewBox="0 0 17 12"><path d="M4 11C0 11 0 6 3.500 6 4 1 10 0 12 4c3 0 4.500 2 4 4.500 0 1.500-1.500 2.500-3 2.500z" fill="#e4e4e4" stroke="#333" /><path d="M3.500 6C4 1 10 0 12 4c2 0 3.500 1 4 3-3-2-5-1-7 1-2-2-3.500-2.500-5.500-2z" fill="#9a9a9a" /></svg>
        </TrayButton>
        <TrayButton $width={36} aria-label="Volume">
          <svg width="17" height="14" viewBox="0 0 17 14" fill="none" stroke="#111"><path d="M.5 4.500h3l3-3.500v12l-3-3.500h-3zM9 5c1 1 1 3 0 4" /><path d="M11 3c2 2 2 6 0 8M13.500 1.500c3 3 3 8 0 11" stroke="#888" /></svg>
        </TrayButton>
        <TrayButton $width={36} aria-label="Touchpad"><svg width="15" height="13" viewBox="0 0 15 13" fill="none" stroke="#111"><path d="M1.500.5h12l1 1v10l-1 1h-12l-1-1v-10zM.5 7.500h14M7.500 7.500v5" /></svg></TrayButton>
        <Clock><span>4:08 PM</span><span>8/16/2020</span></Clock>
        <TrayButton $width={36} aria-label="Notifications"><svg width="16" height="16" viewBox="0 0 16 16"><path d="M0 0h16v13h-5l-3 3-3-3H0z" fill="#000" /><path d="M3 3.500h10M3 6.500h10M3 9.500h6" stroke="#fff" /></svg></TrayButton>
        <ShowDesktop aria-label="Show desktop" />
      </Tray>
    </TaskRow>
  );
}

export default function App() {
  return (
    <Page>
      <GlobalStyle />
      <TitleBar />
      <MenuRow>
        {MENU.map((m, i) => <MenuTab key={m} $width={MENU_WIDTHS[i]} $active={m === "Home"}><span>{m}</span></MenuTab>)}
        <MenuActions>
          <ActionButton $width={69}>
            <svg width="13" height="12" viewBox="0 0 13 12" fill="none" stroke="#217346"><path d="M3 4.500H.5v7h9V9M3 8.500C3 5 5 4 8 4V1.500L11.500 5 8 8V5.500" /></svg>
            Share
          </ActionButton>
          <ActionButton $width={100}>
            <svg width="12" height="12" viewBox="0 0 12 12" fill="none" stroke="#217346"><path d="M.5 1.500h11v7h-6l-2.500 2.500V8.500H.5z" /></svg>
            Comments
          </ActionButton>
        </MenuActions>
      </MenuRow>
      <Ribbon />
      <FormulaBar />
      <Sheet />
      <SheetTabs />
      <StatusBar />
      <Taskbar />
    </Page>
  );
}

const GlobalStyle = createGlobalStyle`
  * {
    box-sizing: border-box;
  }

  body {
    margin: 0;
    font-family: "Open Sans", "Noto Sans", sans-serif;
    font-size: 12px;
    color: #444;
  }

  button, input, select {
    font: inherit;
    color: inherit;
    border: none;
    border-radius: 0;
    background: none;
    padding: 0;
    margin: 0;
    outline: none;
  }

  svg {
    flex: none;
  }
`;

const Page = styled.div`
  display: flex;
  flex-direction: column;
  height: 100vh;
  overflow: hidden;
  background: #e6e6e6;
`;

const Title = styled.header`
  position: relative;
  display: flex;
  align-items: center;
  height: 34px;
  flex: none;
  padding-bottom: 1px;
  background: #217346;
  color: #fff;
  overflow: hidden;
`;

const Circuit = styled.svg`
  position: absolute;
  right: 0;
  top: 0;
`;

const QuickAccess = styled.div`
  display: flex;
  align-items: center;
  width: 331px;
  padding-left: 23px;
`;

const AutoSave = styled.div`
  display: flex;
  align-items: center;
  justify-content: space-between;
  width: 95px;
  margin-right: 9px;
`;

const Toggle = styled.button`
  display: flex;
  align-items: center;
  gap: 6px;
  width: 38px;
  height: 15px;
  padding-left: 4px;
  border: 1px solid #fff;
  border-radius: 8px;
  font-size: 10px;

  i {
    width: 8px;
    height: 8px;
    border-radius: 50%;
    background: #fff;
  }
`;

const TitleButton = styled.button`
  display: flex;
  align-items: center;
  justify-content: center;
  width: ${p => p.$width}px;
  height: 32px;
`;

const FileName = styled.div`
  display: flex;
  align-items: center;
  width: 261px;
  white-space: nowrap;

  span {
    width: 168px;
    font-family: Lato, sans-serif;
  }

  svg:last-child {
    margin-left: 1px;
  }
`;

const Search = styled.label`
  display: flex;
  align-items: center;
  flex: 1;
  height: 22px;
  padding-left: 18px;
  gap: 15px;
  background: #9fcdb3;
  position: relative;

  input {
    flex: 1;
    min-width: 0;
  }

  input::placeholder {
    color: #1c5c38;
    opacity: 1;
  }
`;

const Account = styled.div`
  position: relative;
  display: flex;
  align-items: center;
  justify-content: flex-end;
  width: 408px;
`;

const Avatar = styled.div`
  display: grid;
  place-items: center;
  width: 24px;
  height: 24px;
  margin: 0 12px 0 5px;
  border-radius: 50%;
  background: #7a7574;
  font-size: 11px;
`;

const MenuRow = styled.nav`
  display: flex;
  align-items: center;
  height: 30px;
  flex: none;
  background: #f3f2f1;
`;

const MenuTab = styled.button`
  display: flex;
  align-items: flex-end;
  justify-content: center;
  width: ${p => p.$width}px;
  height: 30px;
  padding-bottom: 2px;
  white-space: nowrap;
  font-weight: ${p => p.$active ? 600 : 400};

  span {
    height: 24px;
    line-height: 23px;
    border-bottom: ${p => p.$active ? "3px solid #217346" : "3px solid transparent"};
  }
`;

const MenuActions = styled.div`
  display: flex;
  gap: 7px;
  margin: 0 12px 0 auto;
`;

const ActionButton = styled.button`
  display: flex;
  align-items: center;
  justify-content: center;
  gap: 5px;
  width: ${p => p.$width}px;
  height: 24px;
  border: 1px solid #e1dfdd;
  border-radius: 2px;
  background: #fff;
  color: #217346;
  font-weight: 600;
`;

const RibbonBar = styled.section`
  display: flex;
  height: 96px;
  flex: none;
  padding: 4px 0;
  background: #f3f2f1;
`;

const Group = styled.div`
  display: flex;
  flex-direction: column;
  width: ${p => p.$width}px;
  height: 88px;
  flex: none;
  border-right: 1px solid #b3b0ad;
`;

const GroupBody = styled.div`
  display: flex;
  height: 76px;
  flex: none;
  padding-left: ${p => p.$left || 0}px;
`;

const GroupLabel = styled.div`
  position: relative;
  height: 16px;
  line-height: 16px;
  font-size: 11px;
  text-align: center;
  padding-right: 16px;

  &:not(:has(button)) {
    padding-right: 0;
  }
`;

const LauncherButton = styled.button`
  position: absolute;
  right: 2px;
  top: 0;
  display: flex;
  align-items: center;
  height: 16px;
`;

const ToolRows = styled.div`
  display: flex;
  flex-direction: column;
  gap: 9px;
  height: 76px;
  flex: none;
  padding: 8px 0 0 ${p => p.$left || 8}px;
`;

const ToolRow = styled.div`
  display: flex;
  align-items: center;
  height: 23px;
`;

const ToolButton = styled.button`
  display: flex;
  align-items: center;
  justify-content: center;
  flex: none;
  width: ${p => p.$width}px;
  height: 23px;
  line-height: 22px;
  font-size: ${p => p.$size || 12}px;
  background: ${p => p.$on ? "#c8c6c4" : "none"};
`;

const TextTool = styled.button`
  display: flex;
  align-items: center;
  gap: 3px;
  height: 23px;
  flex: none;
  align-self: flex-start;
  padding: 0 2px 0 4px;
  line-height: 22px;
  white-space: nowrap;
  background: ${p => p.$on ? "#c8c6c4" : "none"};
`;

const Rule = styled.i`
  width: 1px;
  height: 22px;
  margin: 0 ${p => p.$gap || 6}px;
  background: #d2d0ce;
`;

const TallRule = styled.i`
  width: 1px;
  height: 58px;
  margin: 8px 0 0 3px;
  background: #d2d0ce;
`;

const SelectBox = styled.div`
  position: relative;
  width: ${p => p.$width}px;
  height: 23px;
  flex: none;
  color: #222;

  select {
    appearance: none;
    width: 100%;
    height: 23px;
    padding: 0 16px 1px 3px;
    border: 1px solid #c8c6c4;
    background: #fff;
  }

  svg {
    position: absolute;
    right: 3px;
    top: 9px;
    pointer-events: none;
  }
`;

const Raised = styled.svg`
  width: 6px;
  height: 4px;
  margin-bottom: 8px;
  fill: none;
  stroke: #1e7fcb;
`;

const Italic = styled.i`
  font-family: "Liberation Serif", serif;
`;

const FontColor = styled.span`
  width: 16px;
  height: 17px;
  line-height: 13px;
  font-size: 15px;
  border-bottom: 4px solid #e00b0b;
`;

const Decimals = styled.span`
  display: flex;
  flex-direction: column;
  align-items: flex-end;
  font-family: Roboto, sans-serif;
  font-size: 8px;
  line-height: 9px;

  span {
    display: flex;
    align-items: center;
    height: 9px;
  }
`;

const Arrow = styled.svg`
  width: 9px;
  height: 7px;
  fill: none;
  stroke: #1e7fcb;
`;

const SmallColumn = styled.div`
  display: flex;
  flex-direction: column;

  div {
    display: flex;
  }
`;

const BigButton = styled.button`
  display: flex;
  flex-direction: column;
  align-items: center;
  width: ${p => p.$width}px;
  height: 72px;
  padding-top: 2px;
  flex: none;
  white-space: nowrap;

  span {
    display: flex;
    align-items: center;
    gap: 2px;
    min-height: 16px;
    line-height: 16px;
    font-size: 11px;
  }

  > svg {
    margin-bottom: 3px;
  }
`;

const Collapse = styled.button`
  align-self: flex-end;
  margin: 0 8px 0 auto;
`;

const FormulaRow = styled.div`
  display: flex;
  align-items: flex-start;
  height: 47px;
  flex: none;
  padding: 10px 5px 0;
  border-top: 1px solid #c9c9c9;
`;

const NameBox = styled.label`
  display: flex;
  align-items: center;
  width: 102px;
  height: 27px;
  padding: 0 6px;
  border: 1px solid #c6c6c6;
  background: #fff;

  input {
    flex: 1;
    min-width: 0;
  }
`;

const Dots = styled.i`
  width: 30px;
  height: 27px;
  flex: none;
  background: radial-gradient(circle, #a6a6a6 1px, transparent 1px) center / 30px 5px no-repeat,
    linear-gradient(#a6a6a6, #a6a6a6) center 8px / 2px 2px no-repeat,
    linear-gradient(#a6a6a6, #a6a6a6) center 17px / 2px 2px no-repeat;
`;

const FormulaButtons = styled.div`
  display: flex;
  align-items: center;
  width: 110px;
  height: 27px;
  border: 1px solid #c6c6c6;
  background: #fff;
`;

const Fx = styled.i`
  font-family: "Liberation Serif", serif;
  font-size: 16px;
  font-weight: 700;
  line-height: 16px;
  color: #555;

  sub {
    font-size: 11px;
    vertical-align: baseline;
  }
`;

const FormulaInput = styled.label`
  display: flex;
  align-items: center;
  flex: 1;
  height: 27px;
  margin-left: 3px;
  padding: 0 3px 0 11px;
  border: 1px solid #c6c6c6;
  background: #fff;
  font-size: 13px;

  input {
    flex: 1;
    min-width: 0;
  }
`;

const SheetArea = styled.main`
  display: flex;
  flex: 1;
  min-height: 0;
`;

const GridFrame = styled.div`
  flex: 1;
  min-width: 0;
  overflow: hidden;
`;

const Grid = styled.table`
  width: 100%;
  table-layout: fixed;
  border-collapse: separate;
  border-spacing: 0;
  color: #000;
  font-size: 13px;
`;

const Col = styled.col`
  width: ${p => p.$width}px;
`;

const ColHead = styled.th`
  height: 20px;
  padding: 0;
  line-height: 18px;
  font-size: 12px;
  font-weight: 400;
  color: ${p => p.$on ? "#217346" : "#222"};
  background: ${p => p.$on ? "#d2d2d2" : "#e6e6e6"};
  border-right: 1px solid ${p => p.$last ? "transparent" : "#b5b5b5"};
  border-bottom: ${p => p.$on ? "2px solid #217346" : "1px solid #999"};
`;

const Corner = styled.svg`
  display: block;
  width: 12px;
  height: 12px;
  margin: 3px 2px 0 auto;
  fill: #b1b1b1;
`;

const Row = styled.tr`
  height: ${p => p.$tall ? 21 : 20}px;

  > * {
    vertical-align: ${p => p.$tall ? "middle" : "bottom"};
  }
`;

const RowHead = styled.th`
  padding: 0;
  line-height: 18px;
  font-size: 12px;
  font-weight: 400;
  color: ${p => p.$on ? "#217346" : "#222"};
  background: ${p => p.$on ? "#d2d2d2" : "#e6e6e6"};
  border-right: ${p => p.$on ? "2px solid #217346" : "1px solid #999"};
  border-bottom: 1px solid #c6c6c6;
`;

const Cell = styled.td`
  padding: 0 2px;
  line-height: 18px;
  white-space: nowrap;
  background: #fff;
  border-right: 1px solid ${p => p.$last ? "#999" : p.$boxed ? "#000" : "#d4d4d4"};
  border-bottom: 1px solid ${p => p.$boxed ? "#000" : "#d4d4d4"};
`;

const Banner = styled(Cell)`
  text-align: center;
  font-weight: 600;
  background: #b4c6e7;
  border-color: #000;
`;

const Amount = styled(Cell)`
  position: relative;
  text-align: right;
  ${p => p.$line && `border-bottom: ${p.$line};`}

  &::before, &::after {
    content: ${p => p.$selected ? '""' : "none"};
    position: absolute;
    z-index: 1;
  }

  &::before {
    inset: -2px;
    border: 2px solid #217346;
  }

  &::after {
    right: -3px;
    bottom: -4px;
    width: 6px;
    height: 6px;
    border: 1px solid #fff;
    border-width: 1px 0 0 1px;
    background: #217346;
  }
`;

const VerticalScroll = styled.div`
  display: flex;
  flex-direction: column;
  width: 15px;
  margin: 2px 3px 0 3px;
`;

const HorizontalScroll = styled.div`
  display: flex;
  width: 190px;
  height: 15px;
  margin-right: 21px;
`;

const ScrollButton = styled.button`
  display: grid;
  place-items: center;
  width: 15px;
  height: 15px;
  flex: none;
  border: 1px solid #ababab;
  background: #fff;
`;

const ScrollThumb = styled.div`
  flex: 1;
  border: 1px solid #ababab;
  background: #fff;
`;

const ScrollGap = styled.div`
  flex: none;
  width: ${p => p.$across ? 12 : 15}px;
  height: ${p => p.$across ? 15 : 20}px;
  background: #dadada;
`;

const TabStrip = styled.div`
  display: flex;
  align-items: center;
  height: 29px;
  flex: none;
  border-top: 1px solid #999;
  border-bottom: 1px solid #c6c6c6;
`;

const TabNav = styled.div`
  display: flex;
  align-items: center;
  justify-content: center;
  gap: 23px;
  width: 101px;
  height: 20px;
  padding-right: 14px;
  border-right: 1px solid #999;
`;

const SheetTab = styled.button`
  width: ${p => p.$width}px;
  height: ${p => p.$active ? 26 : 20}px;
  flex: none;
  padding-bottom: 2px;
  line-height: 18px;
  white-space: nowrap;
  border-right: 1px solid ${p => p.$plain ? "transparent" : "#999"};

  ${p => p.$active && `
    align-self: flex-start;
    margin-top: -1px;
    padding: 4px 0 0;
    border-left: 1px solid #999;
    border-bottom: 2px solid #217346;
    background: #fff;
    color: #217346;
    font-weight: 700;
  `}
`;

const AddSheet = styled.button`
  display: flex;
  align-items: center;
  margin: 0 auto 0 33px;
`;

const Status = styled.footer`
  display: flex;
  align-items: center;
  justify-content: space-between;
  height: 21px;
  flex: none;
  padding-left: 8px;
  background: #f3f2f1;
  font-size: 11px;
`;

const StatusText = styled.span`
  height: 21px;
  line-height: 19px;
`;

const StatusTools = styled.div`
  display: flex;
  align-items: center;
  height: 21px;
`;

const ViewButton = styled.button`
  display: grid;
  place-items: center;
  width: 40px;
  height: 21px;
  background: ${p => p.$on ? "#c8c6c4" : "none"};
`;

const ZoomButton = styled.button`
  display: grid;
  place-items: center;
  width: 19px;
  height: 21px;
`;

const ZoomSlider = styled.input`
  appearance: none;
  width: 100px;
  height: 11px;
  background: linear-gradient(#a6a6a6, #a6a6a6) center / 100% 1px no-repeat;

  &::-webkit-slider-thumb {
    appearance: none;
    width: 5px;
    height: 11px;
    background: #666;
  }
`;

const ZoomLabel = styled(StatusText)`
  width: 42px;
  padding-right: 8px;
  text-align: right;
`;

const TaskRow = styled.footer`
  display: flex;
  align-items: center;
  height: 40px;
  flex: none;
  background: linear-gradient(90deg, #d3e3ec, #d5e7ec 45%, #d3dfe8 72%, #cfdfe7 85%, #d3e8ee);
`;

const TaskButton = styled.button`
  display: grid;
  place-items: center;
  width: ${p => p.$current ? 48 : 49}px;
  height: 40px;
  margin-left: ${p => p.$current ? 1 : 0}px;
  background: ${p => p.$current ? "#f1f7fa" : "none"};

  ${p => p.$running && `
    background-image: linear-gradient(#429ceb, #429ceb);
    background-size: ${p.$current ? "100%" : "40px"} 2px;
    background-position: center bottom;
    background-repeat: no-repeat;
  `}
`;

const TaskDivider = styled.i`
  width: 5px;
  height: 16px;
  margin: 0 12px 0 4px;
  border: 1px solid #222;
  border-width: 0 1px;
`;

const Tray = styled.div`
  display: flex;
  align-items: center;
  margin-left: auto;
  color: #111;
`;

const TrayButton = styled.button`
  display: grid;
  place-items: center;
  width: ${p => p.$width}px;
  height: 40px;
`;

const Clock = styled.div`
  display: flex;
  flex-direction: column;
  align-items: center;
  width: 68px;
  font-size: 11px;
  line-height: 18px;
`;

const ShowDesktop = styled.button`
  width: 6px;
  height: 40px;
  margin-left: 9px;
  border-left: 1px solid #a3b5bd;
`;
